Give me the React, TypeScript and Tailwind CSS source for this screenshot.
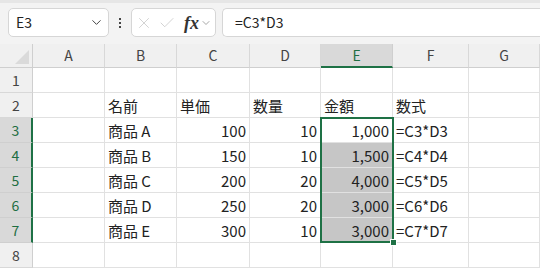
import { ChevronDown, X, Check } from "lucide-react";

const COLS = ["A", "B", "C", "D", "E", "F", "G"];

type Cell = { v: string; right?: boolean };

const ROWS: Cell[][] = [
  [],
  [{ v: "" }, { v: "名前" }, { v: "単価" }, { v: "数量" }, { v: "金額" }, { v: "数式" }],
  [{ v: "" }, { v: "商品 A" }, { v: "100", right: true }, { v: "10", right: true }, { v: "1,000", right: true }, { v: "=C3*D3" }],
  [{ v: "" }, { v: "商品 B" }, { v: "150", right: true }, { v: "10", right: true }, { v: "1,500", right: true }, { v: "=C4*D4" }],
  [{ v: "" }, { v: "商品 C" }, { v: "200", right: true }, { v: "20", right: true }, { v: "4,000", right: true }, { v: "=C5*D5" }],
  [{ v: "" }, { v: "商品 D" }, { v: "250", right: true }, { v: "20", right: true }, { v: "3,000", right: true }, { v: "=C6*D6" }],
  [{ v: "" }, { v: "商品 E" }, { v: "300", right: true }, { v: "10", right: true }, { v: "3,000", right: true }, { v: "=C7*D7" }],
  [],
];

const font = { fontFamily: '"Noto Sans CJK JP", "Noto Sans", sans-serif' };

export default function App() {
  return (
    <div className="w-[540px] h-[268px] overflow-hidden bg-white text-[#222]" style={font}>
      {/* Formula bar */}
      <div className="h-[44px] bg-[#f3f3f3] border-t-[3px] border-[#e6e6e6] flex items-start pt-[5px] pl-[8px] gap-[6px]">
        <div className="w-[101px] h-[29px] bg-white border border-[#d6d6d6] rounded-[5px] flex items-center justify-between pl-[7px] pr-[4px]">
          <span className="text-[14px] text-[#222]">E3</span>
          <ChevronDown size={15} strokeWidth={1.6} className="text-[#444]" />
        </div>
        <div className="w-[10px] h-[29px] flex flex-col items-center justify-center gap-[2px]">
          <span className="w-[2px] h-[2px] bg-[#444]" />
          <span className="w-[2px] h-[2px] bg-[#444]" />
          <span className="w-[2px] h-[2px] bg-[#444]" />
        </div>
        <div className="w-[85px] h-[29px] bg-white border border-[#d6d6d6] rounded-[5px] flex items-center pl-[3px]">
          <X size={18} strokeWidth={1} className="text-[#c4c4c4]" />
          <Check size={18} strokeWidth={1} className="text-[#c4c4c4] ml-[5px]" />
          <span
            className="ml-[8px] text-[18px] italic font-bold text-[#333] leading-none"
            style={{ fontFamily: '"Liberation Serif", serif' }}
          >
            fx
          </span>
          <ChevronDown size={12} strokeWidth={1.5} className="text-[#888] ml-[1px]" />
        </div>
        <div className="flex-1 h-[29px] bg-white border border-[#d6d6d6] rounded-l-[5px] border-r-0 flex items-center pl-[12px]">
          <span className="text-[14px] text-[#222]">=C3*D3</span>
        </div>
      </div>

      {/* Sheet */}
      <div className="relative">
        <div className="grid grid-cols-[33px_72px_72px_73px_71px_72px_76px_71px] grid-rows-[24px_repeat(8,25px)]">
          {/* Column header row */}
          <div className="bg-[#f0f0f0] border-r border-b border-[#cfcfcf] relative">
            <div className="absolute right-[3px] bottom-[3px] w-0 h-0 border-l-[14px] border-l-transparent border-b-[14px] border-b-[#dadada]" />
          </div>
          {COLS.map((c) => (
            <div
              key={c}
              className={`flex items-center justify-center text-[14px] border-b border-r ${
                c === "E"
                  ? "bg-[#d9d9d9] text-[#1e6e42] border-r-[#cfcfcf] border-b-2 border-b-[#1e7145]"
                  : "bg-[#f0f0f0] text-[#444] border-[#d8d8d8] border-b-[#cfcfcf]"
              }`}
            >
              {c}
            </div>
          ))}

          {ROWS.map((row, ri) => {
            const rowNum = ri + 1;
            const selRow = rowNum >= 3 && rowNum <= 7;
            return [
              <div
                key={`h${rowNum}`}
                className={`flex items-center justify-center text-[14px] border-b ${
                  selRow
                    ? "bg-[#d9d9d9] text-[#1e6e42] border-b-[#cfcfcf] border-r-2 border-r-[#1e7145]"
                    : "bg-[#f0f0f0] text-[#444] border-b-[#d8d8d8] border-r border-r-[#cfcfcf]"
                }`}
              >
                {rowNum}
              </div>,
              ...COLS.map((c, ci) => {
                const cell = row[ci];
                const shaded = c === "E" && rowNum >= 4 && rowNum <= 7;
                return (
                  <div
                    key={`${c}${rowNum}`}
                    className={`flex items-end pb-[1px] text-[15px] leading-[20px] border-r border-b border-[#e1e1e1] ${
                      cell?.right ? "justify-end pr-[3px]" : "justify-start pl-[3px]"
                    } ${shaded ? "bg-[#c6c6c6]" : "bg-white"}`}
                  >
                    {cell?.v}
                  </div>
                );
              }),
            ];
          })}
        </div>

        {/* Selection outline E3:E7 */}
        <div className="absolute left-[320px] top-[73px] w-[74px] h-[126px] border-2 border-[#1e7145] pointer-events-none">
          <div className="absolute -right-[5px] -bottom-[5px] w-[7px] h-[7px] bg-[#1e7145] border border-white" />
        </div>
      </div>
    </div>
  );
}
